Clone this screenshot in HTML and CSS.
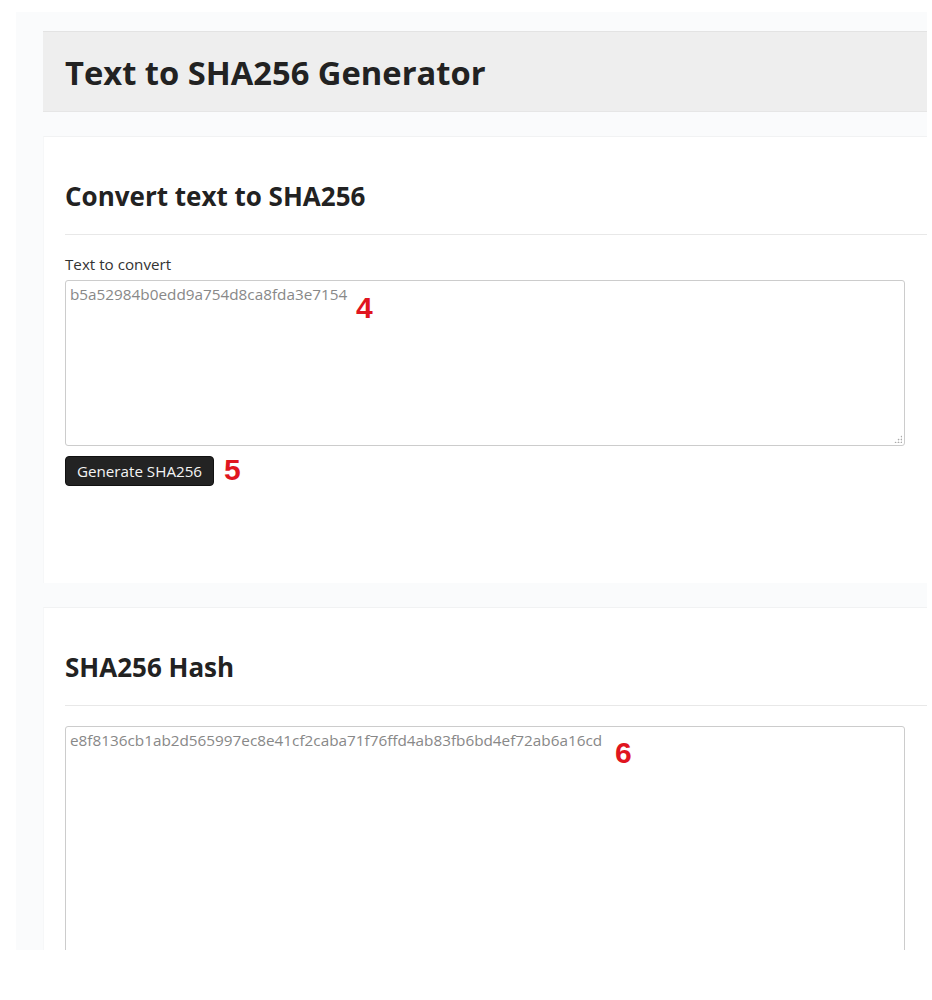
FILE: index.html
```html
<!DOCTYPE html>
<html lang="en">
<head>
<meta charset="utf-8">
<title>Text to SHA256 Generator</title>
<link rel="stylesheet" href="styles.css">
</head>
<body>
<div class="page">
  <header class="title-bar">
    <h1>Text to SHA256 Generator</h1>
  </header>

  <section class="card">
    <h2 class="card-title">Convert text to SHA256</h2>
    <label class="field-label" for="src">Text to convert</label>
    <div class="field">
      <textarea id="src" class="box box-input">b5a52984b0edd9a754d8ca8fda3e7154</textarea>
      <span class="grip"></span>
      <span class="marker marker-4">4</span>
    </div>
    <div class="actions">
      <button class="btn" type="button">Generate SHA256</button>
      <span class="marker-inline">5</span>
    </div>
  </section>

  <section class="card card-result">
    <h2 class="card-title">SHA256 Hash</h2>
    <div class="field">
      <textarea class="box box-output">e8f8136cb1ab2d565997ec8e41cf2caba71f76ffd4ab83fb6bd4ef72ab6a16cd</textarea>
      <span class="marker marker-6">6</span>
    </div>
  </section>
</div>
</body>
</html>
```

FILE: styles.css
```css
* { box-sizing: border-box; }

html, body {
  margin: 0;
  padding: 0;
  background: #ffffff;
}

body {
  font-family: "Open Sans", "Noto Sans", "Liberation Sans", sans-serif;
  color: #222;
}

.page {
  margin: 12px 5px 0 16px;
  height: 938px;
  overflow: hidden;
  background: #fafbfc;
  padding: 19px 0 0 27px;
}

.title-bar {
  height: 81px;
  background: #eeeeee;
  border-top: 1px solid #e3e3e3;
  border-bottom: 1px solid #e6e6e6;
  padding-left: 22px;
  display: flex;
  align-items: center;
}

.title-bar h1 {
  margin: 0;
  font-size: 32.7px;
  font-weight: 700;
  color: #222;
  line-height: 1.2;
  padding-top: 2px;
}

.card {
  margin-top: 24px;
  background: #ffffff;
  border-top: 1px solid #f1f2f3;
  border-left: 1px solid #f6f7f8;
  padding: 0 0 0 21px;
  height: 447px;
}

.card-result {
  height: auto;
  padding-bottom: 400px;
}

.card-title {
  margin: 0;
  padding: 45px 0 24px;
  font-size: 26px;
  line-height: 28px;
  font-weight: 700;
  color: #222;
  border-bottom: 1px solid #e8e8e8;
}

.field-label {
  display: block;
  margin-top: 19px;
  font-size: 15.2px;
  line-height: 20px;
  color: #333;
}

.field {
  position: relative;
  width: 840px;
  margin-top: 6px;
}

.card-result .field {
  margin-top: 20px;
}

.box {
  display: block;
  width: 840px;
  border: 1px solid #cccccc;
  border-radius: 3px;
  padding: 3px 4px;
  font-family: "Open Sans", "Noto Sans", "Liberation Sans", sans-serif;
  font-size: 15.3px;
  line-height: 20px;
  color: #888;
  background: #fff;
  resize: none;
  outline: none;
}

.box-input { height: 166px; }
.box-output { height: 400px; }

.grip {
  position: absolute;
  right: 3px;
  bottom: 3px;
  width: 8px;
  height: 8px;
  background-image: radial-gradient(circle, #aaa 0.8px, transparent 1.1px);
  background-size: 3px 3px;
  clip-path: polygon(100% 0, 100% 100%, 0 100%);
}

.marker,
.marker-inline {
  font-family: "Liberation Sans", Arial, sans-serif;
  font-weight: 700;
  font-size: 30px;
  line-height: 30px;
  color: #e0151f;
}

.marker {
  position: absolute;
}

.marker-4 { left: 291px; top: 13px; }
.marker-6 { left: 550px; top: 12px; }

.actions {
  display: flex;
  align-items: center;
  gap: 10px;
  margin-top: 10px;
}

.btn {
  height: 30px;
  width: 149px;
  padding: 0;
  border: 1px solid #111;
  border-radius: 4px;
  background: #232323;
  color: #f4f4f4;
  font-family: "Open Sans", "Noto Sans", "Liberation Sans", sans-serif;
  font-size: 15.2px;
  line-height: 28px;
  cursor: pointer;
}

.marker-inline {
  margin-top: -2px;
}
```
